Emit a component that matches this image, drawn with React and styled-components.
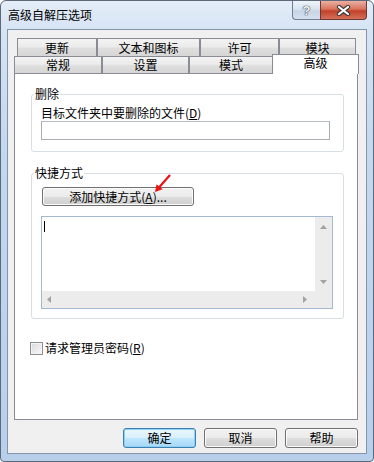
import React from 'react';
import styled, { createGlobalStyle } from 'styled-components';

const Global = createGlobalStyle`
  html, body {
    margin: 0;
    padding: 0;
    background: #ffffff;
  }
  body {
    font-family: "Noto Sans CJK SC", "Liberation Sans", sans-serif;
    font-size: 12px;
    color: #000;
  }
`;

const Window = styled.div`
  width: 374px;
  height: 462px;
  box-sizing: border-box;
  border: 1px solid #5d6878;
  border-radius: 6px 6px 4px 4px;
  background: linear-gradient(to bottom, #e4edf8 0px, #d6e4f4 28px, #c4d8ef 140px, #b8cfeb 100%);
  padding: 0 6px 7px 6px;
  display: flex;
  flex-direction: column;
`;

const TitleBar = styled.div`
  height: 28px;
  display: flex;
  align-items: flex-start;
`;

const Title = styled.div`
  padding: 7px 0 0 1px;
  line-height: 14px;
  font-size: 12px;
`;

const Caption = styled.div`
  margin-left: auto;
  display: flex;
`;

const HelpButton = styled.div`
  width: 28px;
  height: 19px;
  box-sizing: border-box;
  border: 1px solid #6e7e93;
  border-top: none;
  border-right: none;
  border-radius: 0 0 0 4px;
  background: linear-gradient(to bottom, #eef3f9 0%, #d9e3ef 45%, #c6d4e5 55%, #d4e0ee 100%);
  display: flex;
  align-items: center;
  justify-content: center;
  font-family: "Liberation Sans", sans-serif;
  font-weight: bold;
  font-size: 13px;
  color: #f4f6f9;
  text-shadow: 0 0 1px #3c4654, 0 0 1px #3c4654, 0 0 1px #3c4654;
`;

const CloseButton = styled.div`
  width: 47px;
  height: 19px;
  box-sizing: border-box;
  border: 1px solid #6b3a33;
  border-top: none;
  border-radius: 0 0 4px 0;
  background: linear-gradient(to bottom, #eab0a3 0%, #d9735d 45%, #c2412a 55%, #d5705a 100%);
  display: flex;
  align-items: center;
  justify-content: center;
`;

const Client = styled.div`
  flex: 1;
  border: 1px solid #8494aa;
  background: #f0f0f0;
  display: flex;
  flex-direction: column;
  padding: 8px 8px 5px 6px;
`;

const TabRow = styled.div`
  display: flex;
  align-items: flex-end;
  height: ${p => p.$h}px;
  padding-left: ${p => p.$indent}px;
`;

const Tab = styled.div`
  width: ${p => p.$w}px;
  box-sizing: border-box;
  height: ${p => p.$h}px;
  border: 1px solid #898c95;
  border-bottom: none;
  background: linear-gradient(to bottom, #f3f3f3 0%, #ebebeb 45%, #dedede 55%, #d6d6d6 100%);
  display: flex;
  align-items: center;
  justify-content: center;
  line-height: 14px;
`;

const ActiveTab = styled(Tab)`
  background: #ffffff;
  height: 20px;
  margin: 0 -2px -1px -1px;
  padding-bottom: 3px;
  position: relative;
  z-index: 1;
`;

const Panel = styled.div`
  height: 347px;
  box-sizing: border-box;
  border: 1px solid #898c95;
  background: #ffffff;
  padding: 13px 13px 0 16px;
  display: flex;
  flex-direction: column;
`;

const Group = styled.fieldset`
  margin: ${p => p.$top}px 0 0 0;
  padding: 0;
  border: 1px solid #d5dfe5;
  border-radius: 3px;
  min-inline-size: 0;
`;

const Legend = styled.legend`
  margin-left: 2px;
  padding: 0 1px;
  line-height: 14px;
  font-size: 12px;
`;

const GroupBody = styled.div`
  position: relative;
  padding: ${p => p.$pad};
  display: flex;
  flex-direction: column;
  align-items: flex-start;
`;

const FieldLabel = styled.div`
  line-height: 14px;
`;

const TextBox = styled.div`
  margin-top: 1px;
  width: 289px;
  height: 19px;
  box-sizing: border-box;
  border: 1px solid #abadb3;
  border-top-color: #b5bcc7;
  background: #ffffff;
`;

const PushButton = styled.button`
  width: ${p => p.$w}px;
  height: ${p => p.$h || 20}px;
  box-sizing: border-box;
  margin-left: ${p => p.$ml || 0}px;
  padding: 0;
  border: 1px solid ${p => (p.$default ? '#3c7fb1' : '#707070')};
  border-radius: 3px;
  background: ${p =>
    p.$default
      ? 'linear-gradient(to bottom, #eaf6fd 0%, #d9f0fc 50%, #bee6fd 51%, #a7d9f5 100%)'
      : 'linear-gradient(to bottom, #f2f2f2 0%, #ebebeb 50%, #dddddd 51%, #cfcfcf 100%)'};
  box-shadow: inset 0 0 0 1px ${p => (p.$default ? '#8ed0f5' : '#fbfbfb')};
  font-family: "Noto Sans CJK SC", "Liberation Sans", sans-serif;
  font-size: 12px;
  line-height: 14px;
  color: #000;
`;

const ListBox = styled.div`
  margin-top: 10px;
  width: 292px;
  height: 93px;
  box-sizing: border-box;
  border: 1px solid #a3b9d2;
  display: grid;
  grid-template-columns: 1fr 17px;
  grid-template-rows: 1fr 17px;
  background: #ffffff;
`;

const EditArea = styled.div`
  padding: 4px 0 0 2px;
`;

const Caret = styled.div`
  width: 1px;
  height: 11px;
  background: #000;
`;

const VTrack = styled.div`
  background: #ececec;
  display: flex;
  flex-direction: column;
  justify-content: space-between;
  align-items: center;
  padding: 8px 0 7px;
`;

const HTrack = styled.div`
  background: #ececec;
  display: flex;
  justify-content: space-between;
  align-items: center;
  padding: 0 8px 0 5px;
`;

const Corner = styled.div`
  background: #ececec;
`;

const CheckRow = styled.label`
  margin: 22px 0 0 -1px;
  display: flex;
  align-items: center;
  gap: 2px;
  line-height: 14px;
`;

const CheckBox = styled.span`
  width: 13px;
  height: 13px;
  box-sizing: border-box;
  border: 1px solid #8e8f8f;
  background: linear-gradient(135deg, #d9d9d9 0%, #ededed 60%, #f7f7f7 100%);
  box-shadow: inset 0 0 0 1px #f4f4f4;
`;

const ButtonRow = styled.div`
  margin-top: 8px;
  display: flex;
  justify-content: flex-end;
  gap: 8px;
`;

const Arrow = styled.svg`
  position: absolute;
  left: 118px;
  top: -8px;
`;

const Tri = ({ dir }) => {
  const pts = {
    up: '0,4 3.5,0 7,4',
    down: '0,0 7,0 3.5,4',
    left: '4,0 4,7 0,3.5',
    right: '0,0 0,7 4,3.5',
  }[dir];
  const vertical = dir === 'up' || dir === 'down';
  return (
    <svg width={vertical ? 7 : 4} height={vertical ? 4 : 7}>
      <polygon points={pts} fill="#a2a2a2" />
    </svg>
  );
};

const Mn = ({ k }) => (
  <>
    (<u>{k}</u>)
  </>
);

export default function App() {
  return (
    <>
      <Global />
      <Window>
        <TitleBar>
          <Title>高级自解压选项</Title>
          <Caption>
            <HelpButton>?</HelpButton>
            <CloseButton>
              <svg width="15" height="11" viewBox="0 0 15 11">
                <path d="M3 2 L12 9 M12 2 L3 9" stroke="#3a3a3a" strokeWidth="4.2" strokeLinecap="round" />
                <path d="M3 2 L12 9 M12 2 L3 9" stroke="#ffffff" strokeWidth="2.2" strokeLinecap="round" />
              </svg>
            </CloseButton>
          </Caption>
        </TitleBar>
        <Client>
          <TabRow $h={18} $indent={3}>
            <Tab $w={80} $h={18}>更新</Tab>
            <Tab $w={103} $h={18}>文本和图标</Tab>
            <Tab $w={79} $h={18}>许可</Tab>
            <Tab $w={77} $h={18}>模块</Tab>
          </TabRow>
          <TabRow $h={17} $indent={0}>
            <Tab $w={88} $h={17}>常规</Tab>
            <Tab $w={87} $h={17}>设置</Tab>
            <Tab $w={84} $h={17}>模式</Tab>
            <ActiveTab $w={87} $h={20}>高级</ActiveTab>
          </TabRow>
          <Panel>
            <Group $top={0}>
              <Legend>删除</Legend>
              <GroupBody $pad="5px 10px 11px 9px">
                <FieldLabel>目标文件夹中要删除的文件<Mn k="D" /></FieldLabel>
                <TextBox />
              </GroupBody>
            </Group>
            <Group $top={14}>
              <Legend>快捷方式</Legend>
              <GroupBody $pad="7px 10px 9px 9px">
                <PushButton $w={152} $h={19} $ml={1}>添加快捷方式<Mn k="A" />...</PushButton>
                <ListBox>
                  <EditArea>
                    <Caret />
                  </EditArea>
                  <VTrack>
                    <Tri dir="up" />
                    <Tri dir="down" />
                  </VTrack>
                  <HTrack>
                    <Tri dir="left" />
                    <Tri dir="right" />
                  </HTrack>
                  <Corner />
                </ListBox>
                <Arrow width="24" height="24" viewBox="0 0 24 24">
                  <line x1="20" y1="3" x2="9.4" y2="15" stroke="#ee1111" strokeWidth="2.2" />
                  <polygon points="5,20 6.6,12.2 12.6,17.2" fill="#ee1111" />
                </Arrow>
              </GroupBody>
            </Group>
            <CheckRow>
              <CheckBox />
              <span>请求管理员密码<Mn k="R" /></span>
            </CheckRow>
          </Panel>
          <ButtonRow>
            <PushButton $w={73} $default>确定</PushButton>
            <PushButton $w={73}>取消</PushButton>
            <PushButton $w={73}>帮助</PushButton>
          </ButtonRow>
        </Client>
      </Window>
    </>
  );
}
